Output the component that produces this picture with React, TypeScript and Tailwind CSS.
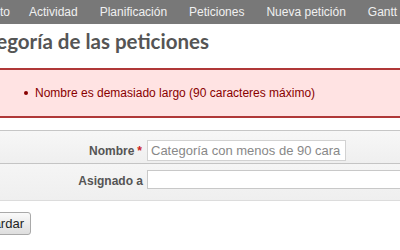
import React from "react";

export default function App() {
  const menu = ["Actividad", "Planificación", "Peticiones", "Nueva petición", "Gantt"];
  return (
    <div className="w-[400px] h-[250px] overflow-hidden bg-white font-['Liberation_Sans',Arial,sans-serif]">
      {/* main menu */}
      <div className="h-[24px] bg-[#787878] flex items-center text-[12px] text-[#f0f0f0] whitespace-nowrap">
        <div className="w-[10px] shrink-0 flex justify-end">
          <span>Proyecto</span>
        </div>
        <div className="flex gap-[2px] ml-[9px] shrink-0">
          {menu.map((m) => (
            <span key={m} className="px-[10px]">
              {m}
            </span>
          ))}
        </div>
      </div>

      {/* title */}
      <div className="mt-[5px] h-[25px] w-[209px] flex justify-end whitespace-nowrap">
        <h2 className="shrink-0 text-[20.5px] leading-[25px] font-bold text-[#555] font-['Lato','Liberation_Sans',sans-serif]">
          Categoría de las peticiones
        </h2>
      </div>

      {/* error flash */}
      <div className="mt-[14px] h-[50px] border-y-2 border-[#b03838] bg-[#ffe3e3] flex items-center text-[12px] text-[#880000]">
        <span className="ml-[24px] w-[4px] h-[4px] rounded-full bg-[#880000] shrink-0" />
        <span className="ml-[7px] whitespace-nowrap">
          Nombre es demasiado largo (90 caracteres máximo)
        </span>
      </div>

      {/* form box */}
      <div className="mt-[12px] border-t border-b border-t-[#c6c6c6] border-b-[#dcdcdc] bg-[#f3f3f3]">
        <div className="h-[33px] pt-[9px] flex items-start border-b border-[#c4c4c4] bg-gradient-to-b from-[#f7f7f7] to-[#efefef]">
          <div className="w-[143px] shrink-0 flex justify-end pt-[2px] text-[12px] font-bold text-[#555] whitespace-nowrap">
            Nombre<span className="ml-[3px] text-[#cc2222] font-bold">*</span>
            <span className="w-[1px]" />
          </div>
          <input
            className="ml-[4px] w-[199px] h-[21px] border border-[#d2d2d2] bg-white px-[3px] text-[13px] text-[#888] placeholder:text-[#888] outline-none font-['Liberation_Sans',Arial,sans-serif]"
            placeholder="Categoría con menos de 90 cara"
            readOnly
          />
        </div>
        <div className="h-[36px] pt-[6px] flex items-start bg-gradient-to-b from-[#f5f5f5] to-[#efefef]">
          <div className="w-[143px] shrink-0 flex justify-end pt-[2px] text-[12px] font-bold text-[#555] whitespace-nowrap">
            Asignado a
          </div>
          <div className="ml-[4px] w-[300px] h-[19px] shrink-0 border border-[#c8c8c8] bg-white" />
        </div>
      </div>

      {/* button */}
      <div className="mt-[11px] w-[31px] flex justify-end whitespace-nowrap">
        <button className="shrink-0 h-[23px] px-[6px] border border-[#a9a9a9] rounded-[3px] bg-gradient-to-b from-[#fafafa] to-[#dedede] text-[13px] text-[#222] font-['Liberation_Sans',Arial,sans-serif]">
          Guardar
        </button>
      </div>
    </div>
  );
}
